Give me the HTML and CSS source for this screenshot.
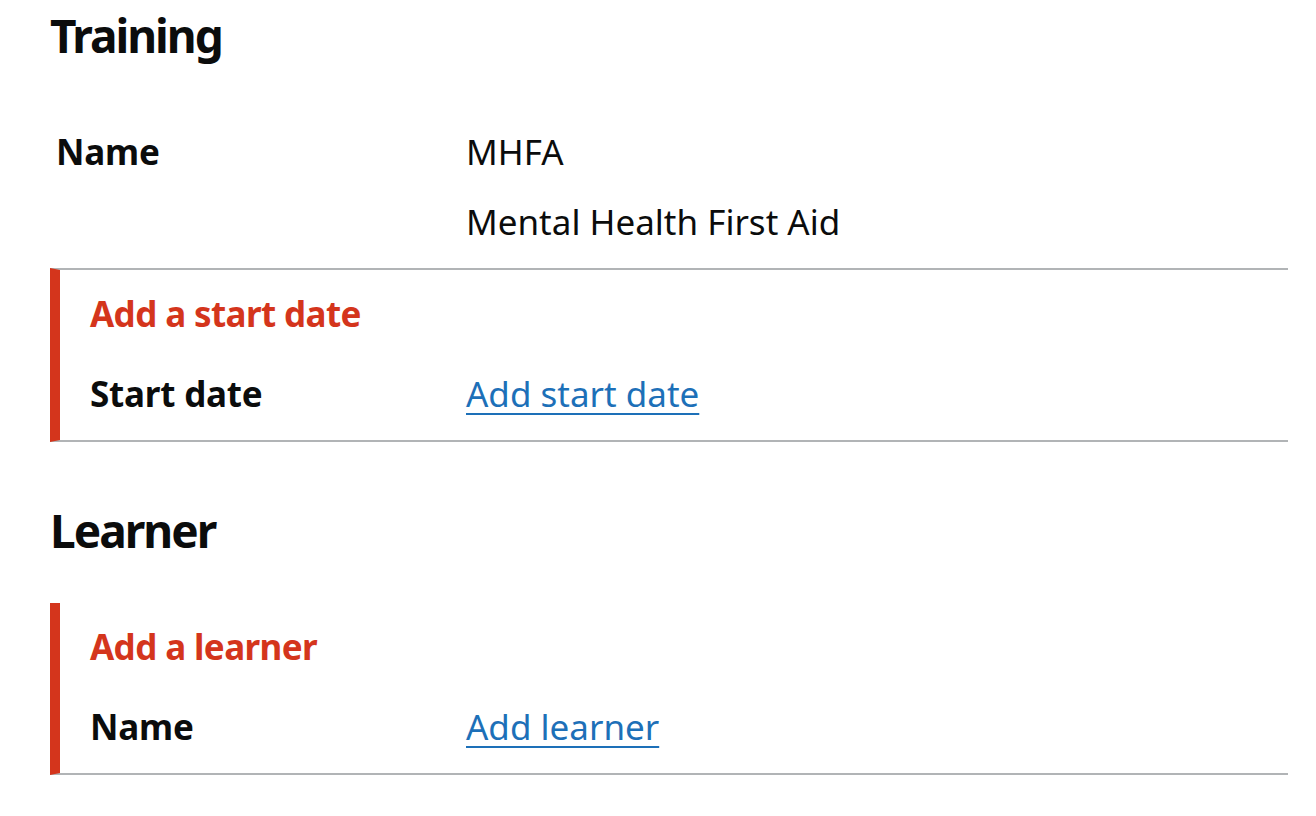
FILE: index.html
```html
<!DOCTYPE html>
<html lang="en">
<head>
<meta charset="utf-8">
<title>Training</title>
<link rel="stylesheet" href="styles.css">
</head>
<body>
<main class="page">
  <h2 class="heading">Training</h2>
  <dl class="summary summary--plain">
    <div class="row">
      <dt class="key">Name</dt>
      <dd class="value">
        <p class="value-line">MHFA</p>
        <p class="value-line">Mental Health First Aid</p>
      </dd>
    </div>
  </dl>

  <section class="card card--top">
    <h3 class="card-title">Add a start date</h3>
    <dl class="summary">
      <div class="row row--card">
        <dt class="key">Start date</dt>
        <dd class="value"><a class="link" href="#">Add start date</a></dd>
      </div>
    </dl>
  </section>

  <h2 class="heading heading--second">Learner</h2>

  <section class="card">
    <h3 class="card-title">Add a learner</h3>
    <dl class="summary">
      <div class="row row--card">
        <dt class="key">Name</dt>
        <dd class="value"><a class="link" href="#">Add learner</a></dd>
      </div>
    </dl>
  </section>
</main>
</body>
</html>
```

FILE: styles.css
```css
html, body {
  margin: 0;
  padding: 0;
  background: #ffffff;
}

body {
  font-family: "Noto Sans", "Liberation Sans", sans-serif;
  color: #0b0c0c;
}

.page {
  width: 1238px;
  padding: 5px 0 0 50px;
}

.heading {
  margin: 0;
  font-size: 46px;
  line-height: 60px;
  font-weight: 700;
  letter-spacing: -2px;
}

.heading--second {
  margin-top: 58px;
}

.summary {
  margin: 0;
}

.summary--plain {
  margin-top: 62px;
  padding-bottom: 21px;
}

.row {
  display: grid;
  grid-template-columns: 416px 1fr;
}

.summary--plain .key {
  padding-left: 6px;
}

.row--card {
  grid-template-columns: 376px 1fr;
}

.key {
  margin: 0;
  font-size: 35px;
  line-height: 50px;
  font-weight: 700;
  letter-spacing: -0.2px;
}

.value {
  margin: 0;
  font-size: 35px;
  line-height: 50px;
}

.value-line {
  margin: 0 0 20px 0;
}

.value-line:last-child {
  margin-bottom: 0;
}

.card {
  border-left: 10px solid #d4351c;
  border-bottom: 2px solid #b1b4b6;
  padding: 19px 0 21px 30px;
  margin-top: 43px;
}

.card--top {
  margin-top: 0;
  border-top: 2px solid #b1b4b6;
}

.card-title {
  margin: 0 0 30px 0;
  font-size: 35px;
  line-height: 50px;
  font-weight: 700;
  color: #d4351c;
  letter-spacing: -0.6px;
}

.link {
  color: #1d70b8;
  text-decoration: underline;
  text-decoration-thickness: 2px;
  text-underline-offset: 6px;
}
```
